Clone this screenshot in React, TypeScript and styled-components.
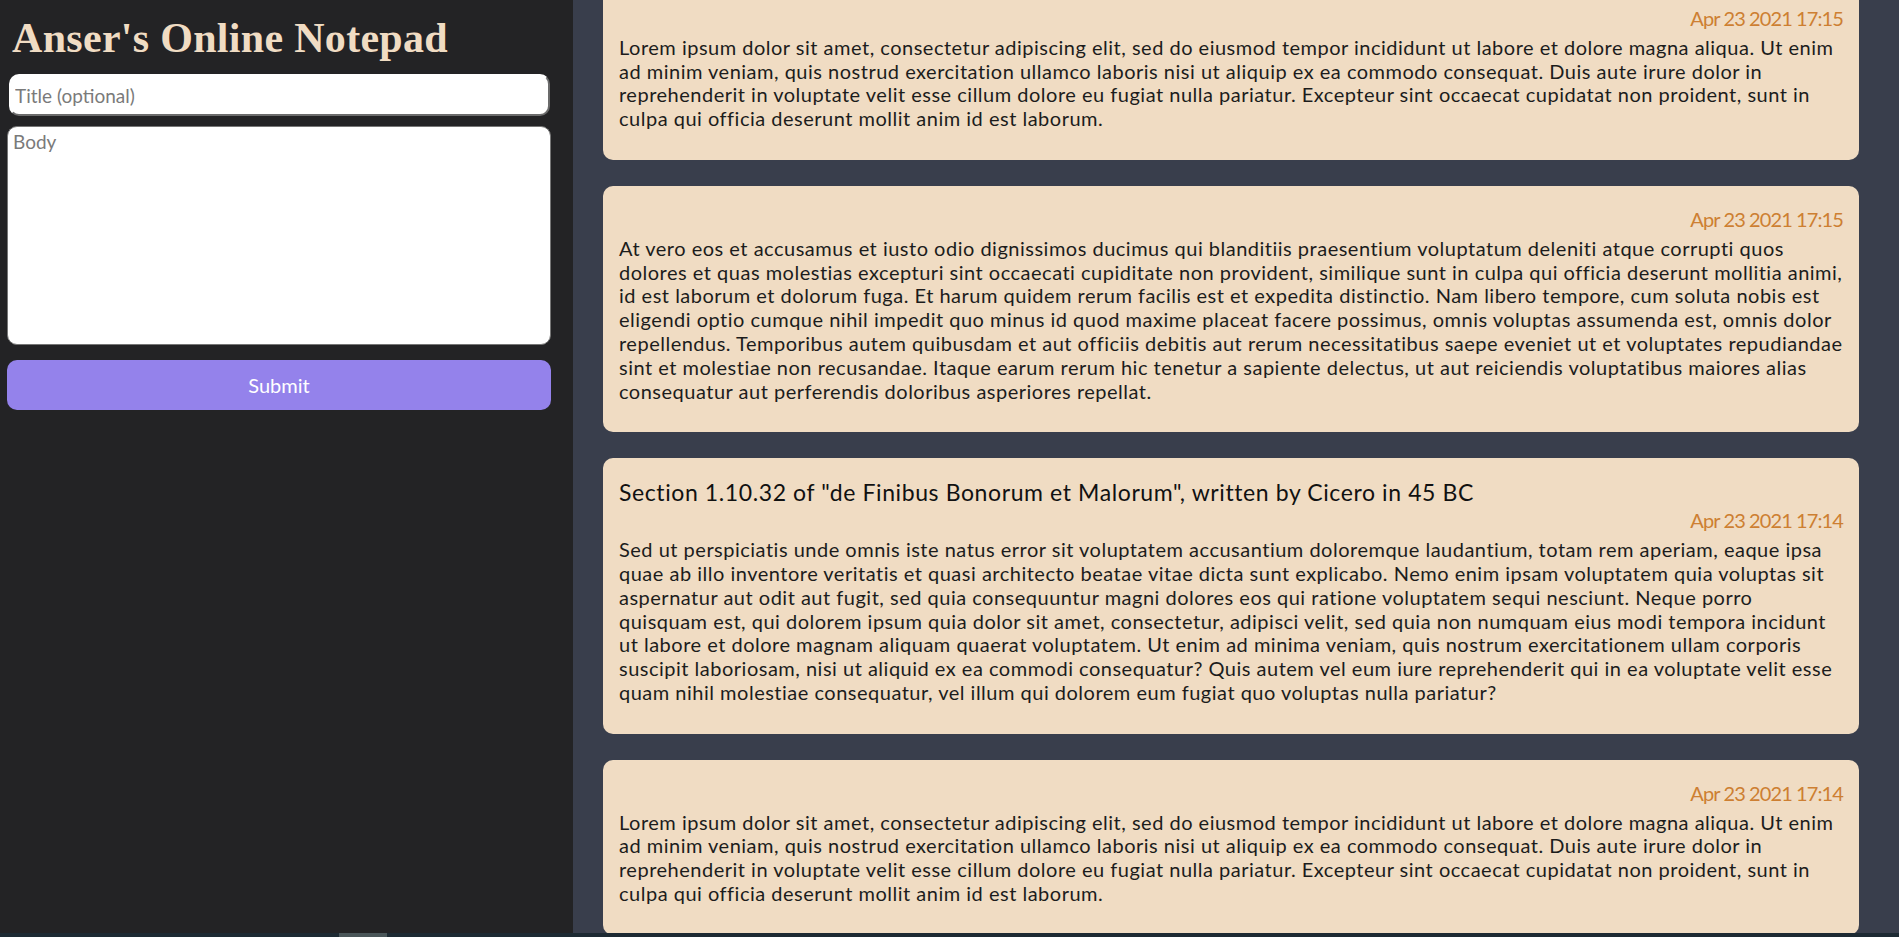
import React, { useLayoutEffect, useRef } from "react";
import styled, { createGlobalStyle } from "styled-components";

const GlobalStyle = createGlobalStyle`
  html, body {
    margin: 0;
    padding: 0;
    height: 100%;
    overflow: hidden;
  }

  body {
    font-family: "Lato", "Open Sans", sans-serif;
    background: #232325;
  }
`;

const StyledApp = styled.div`
  display: flex;
  height: 100vh;
`;

const Sidebar = styled.aside`
  width: 573px;
  flex-shrink: 0;
  background: #232325;
  padding: 0 22px 0 7px;
  box-sizing: border-box;
`;

const Heading = styled.h1`
  margin: 14px 0 12px 5px;
  font-family: "Liberation Serif", "Times New Roman", serif;
  font-size: 42px;
  line-height: 48px;
  letter-spacing: 0.3px;
  font-weight: bold;
  color: #f0dcc3;
`;

const Form = styled.form`
  display: flex;
  flex-direction: column;
`;

const TitleInput = styled.input`
  height: 42px;
  margin: 0 1px 10px 2px;
  padding: 0 4px;
  border: 2px solid;
  border-color: #ffffff #6b6b6b #6b6b6b #ffffff;
  border-radius: 10px;
  background: #fff;
  font-family: "Lato", "Open Sans", sans-serif;
  font-size: 19px;
  color: #222;
  box-sizing: border-box;
  outline: none;

  &::placeholder {
    color: #7a7a7a;
  }
`;

const BodyInput = styled.textarea`
  height: 219px;
  padding: 3px 5px;
  border: 1px solid #767676;
  border-radius: 10px;
  background: #fff;
  font-family: "Lato", "Open Sans", sans-serif;
  font-size: 19px;
  resize: none;
  box-sizing: border-box;
  outline: none;

  &::placeholder {
    color: #7a7a7a;
  }
`;

const SubmitButton = styled.button`
  height: 50px;
  margin-top: 15px;
  border: none;
  border-radius: 10px;
  background: #9482eb;
  color: #fff;
  font-family: "Lato", "Open Sans", sans-serif;
  font-size: 20px;
  cursor: pointer;
`;

const Main = styled.main`
  flex: 1;
  height: 100vh;
  overflow-y: auto;
  background: #393e4c;
  padding: 26px 40px 26px 30px;
  box-sizing: border-box;
  scrollbar-width: none;

  &::-webkit-scrollbar {
    display: none;
  }
`;

const NoteList = styled.div`
  display: flex;
  flex-direction: column;
  gap: 26px;
`;

const Card = styled.article`
  background: #f0dcc3;
  border-radius: 10px;
  padding: 22px 16px 29px;
  color: #1c1c1c;
`;

const NoteTitle = styled.h2`
  margin: -1px 0 4px;
  font-size: 23px;
  line-height: 26px;
  letter-spacing: 0.6px;
  font-weight: normal;
  color: #111;
`;

const NoteDate = styled.div`
  text-align: right;
  font-size: 20px;
  line-height: 23.8px;
  letter-spacing: -0.9px;
  margin-bottom: 5px;
  color: #cd7f32;
`;

const NoteBody = styled.p`
  margin: 0;
  font-size: 20px;
  line-height: 23.8px;
  letter-spacing: 0.5px;
`;

// thin page scroll track along the bottom edge
const ScrollTrack = styled.div`
  position: fixed;
  left: 0;
  right: 0;
  bottom: 0;
  height: 4px;
  background: #1d2a33;
`;

const ScrollThumb = styled.div`
  width: 48px;
  height: 100%;
  margin-left: 339px;
  background: #4a5659;
`;

const lorem =
  "Lorem ipsum dolor sit amet, consectetur adipiscing elit, sed do eiusmod tempor incididunt ut labore et dolore magna aliqua. Ut enim ad minim veniam, quis nostrud exercitation ullamco laboris nisi ut aliquip ex ea commodo consequat. Duis aute irure dolor in reprehenderit in voluptate velit esse cillum dolore eu fugiat nulla pariatur. Excepteur sint occaecat cupidatat non proident, sunt in culpa qui officia deserunt mollit anim id est laborum.";

const notes = [
  { title: "", date: "Apr 23 2021 17:15", body: lorem },
  {
    title: "",
    date: "Apr 23 2021 17:15",
    body: "At vero eos et accusamus et iusto odio dignissimos ducimus qui blanditiis praesentium voluptatum deleniti atque corrupti quos dolores et quas molestias excepturi sint occaecati cupiditate non provident, similique sunt in culpa qui officia deserunt mollitia animi, id est laborum et dolorum fuga. Et harum quidem rerum facilis est et expedita distinctio. Nam libero tempore, cum soluta nobis est eligendi optio cumque nihil impedit quo minus id quod maxime placeat facere possimus, omnis voluptas assumenda est, omnis dolor repellendus. Temporibus autem quibusdam et aut officiis debitis aut rerum necessitatibus saepe eveniet ut et voluptates repudiandae sint et molestiae non recusandae. Itaque earum rerum hic tenetur a sapiente delectus, ut aut reiciendis voluptatibus maiores alias consequatur aut perferendis doloribus asperiores repellat.",
  },
  {
    title:
      'Section 1.10.32 of "de Finibus Bonorum et Malorum", written by Cicero in 45 BC',
    date: "Apr 23 2021 17:14",
    body: "Sed ut perspiciatis unde omnis iste natus error sit voluptatem accusantium doloremque laudantium, totam rem aperiam, eaque ipsa quae ab illo inventore veritatis et quasi architecto beatae vitae dicta sunt explicabo. Nemo enim ipsam voluptatem quia voluptas sit aspernatur aut odit aut fugit, sed quia consequuntur magni dolores eos qui ratione voluptatem sequi nesciunt. Neque porro quisquam est, qui dolorem ipsum quia dolor sit amet, consectetur, adipisci velit, sed quia non numquam eius modi tempora incidunt ut labore et dolore magnam aliquam quaerat voluptatem. Ut enim ad minima veniam, quis nostrum exercitationem ullam corporis suscipit laboriosam, nisi ut aliquid ex ea commodi consequatur? Quis autem vel eum iure reprehenderit qui in ea voluptate velit esse quam nihil molestiae consequatur, vel illum qui dolorem eum fugiat quo voluptas nulla pariatur?",
  },
  { title: "", date: "Apr 23 2021 17:14", body: lorem },
  { title: "", date: "Apr 23 2021 17:13", body: lorem },
];

export default function App() {
  const mainRef = useRef<HTMLElement>(null);

  // the list is shown scrolled a little, first card cut at the top
  useLayoutEffect(() => {
    if (mainRef.current) mainRef.current.scrollTop = 41;
  }, []);

  return (
    <StyledApp>
      <GlobalStyle />
      <Sidebar>
        <Heading>Anser's Online Notepad</Heading>
        <Form onSubmit={(e) => e.preventDefault()}>
          <TitleInput placeholder="Title (optional)" />
          <BodyInput placeholder="Body" />
          <SubmitButton type="submit">Submit</SubmitButton>
        </Form>
      </Sidebar>
      <Main ref={mainRef}>
        <NoteList>
          {notes.map((note, i) => (
            <Card key={i}>
              {note.title && <NoteTitle>{note.title}</NoteTitle>}
              <NoteDate>{note.date}</NoteDate>
              <NoteBody>{note.body}</NoteBody>
            </Card>
          ))}
        </NoteList>
      </Main>
      <ScrollTrack>
        <ScrollThumb />
      </ScrollTrack>
    </StyledApp>
  );
}
